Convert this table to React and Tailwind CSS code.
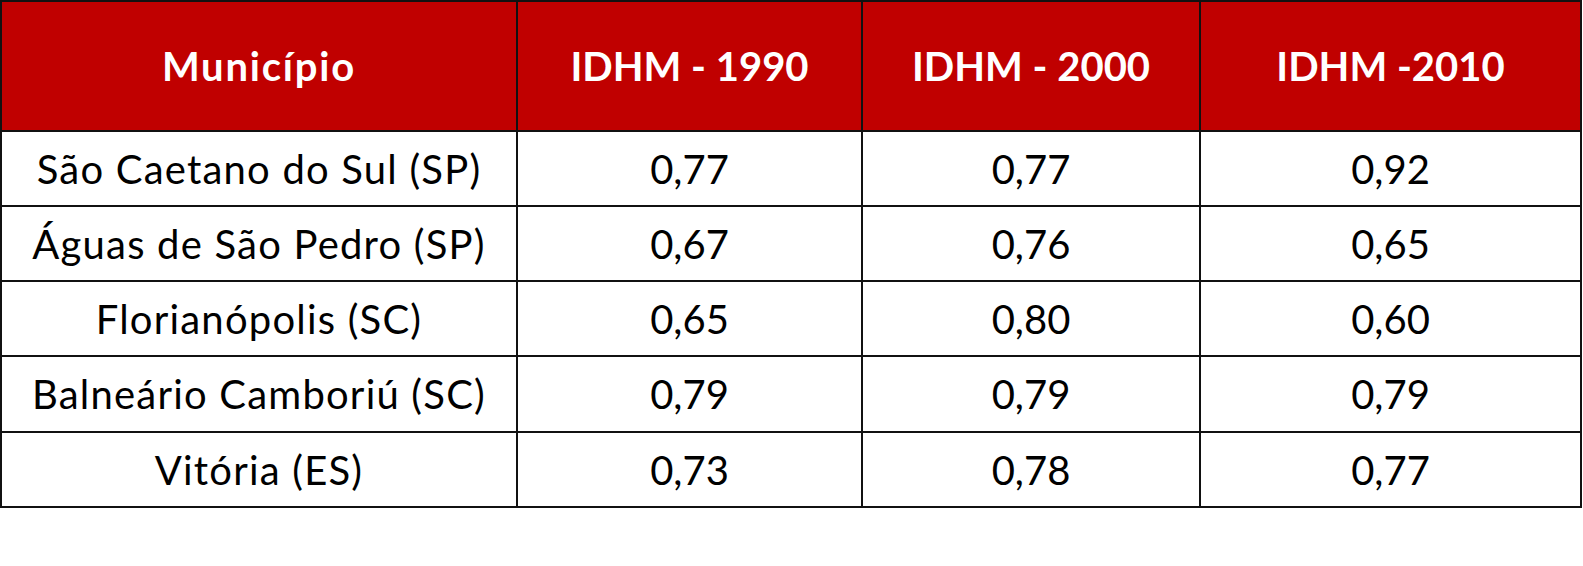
import React from "react";

const rows = [
  ["São Caetano do Sul (SP)", "0,77", "0,77", "0,92"],
  ["Águas de São Pedro (SP)", "0,67", "0,76", "0,65"],
  ["Florianópolis (SC)", "0,65", "0,80", "0,60"],
  ["Balneário Camboriú (SC)", "0,79", "0,79", "0,79"],
  ["Vitória (ES)", "0,73", "0,78", "0,77"],
];

const headers = ["Município", "IDHM - 1990", "IDHM - 2000", "IDHM -2010"];

export default function App() {
  return (
    <div className="w-[1583px] h-[566px] bg-white" style={{ fontFamily: "Lato, 'Open Sans', sans-serif" }}>
      <div className="w-[1582px] bg-[#111111] p-[2px] grid grid-cols-[514px_343px_336px_379px] grid-rows-[128px_73px_73px_73px_74px_73px] gap-[2px]">
        {headers.map((h, i) => (
          <div
            key={h}
            className={
              i === 0
                ? "bg-[#c00000] flex items-center justify-center text-white font-bold text-[40px] leading-none tracking-[1.8px]"
                : "bg-[#c00000] flex items-center justify-center text-white font-bold text-[40px] leading-none"
            }
          >
            {h}
          </div>
        ))}
        {rows.map((r) =>
          r.map((c, i) => (
            <div
              key={r[0] + i}
              className={
                i === 0
                  ? "bg-white flex items-center justify-center text-black text-[40px] leading-none tracking-[1.2px]"
                  : "bg-white flex items-center justify-center text-black text-[40px] leading-none"
              }
            >
              {c}
            </div>
          ))
        )}
      </div>
    </div>
  );
}
